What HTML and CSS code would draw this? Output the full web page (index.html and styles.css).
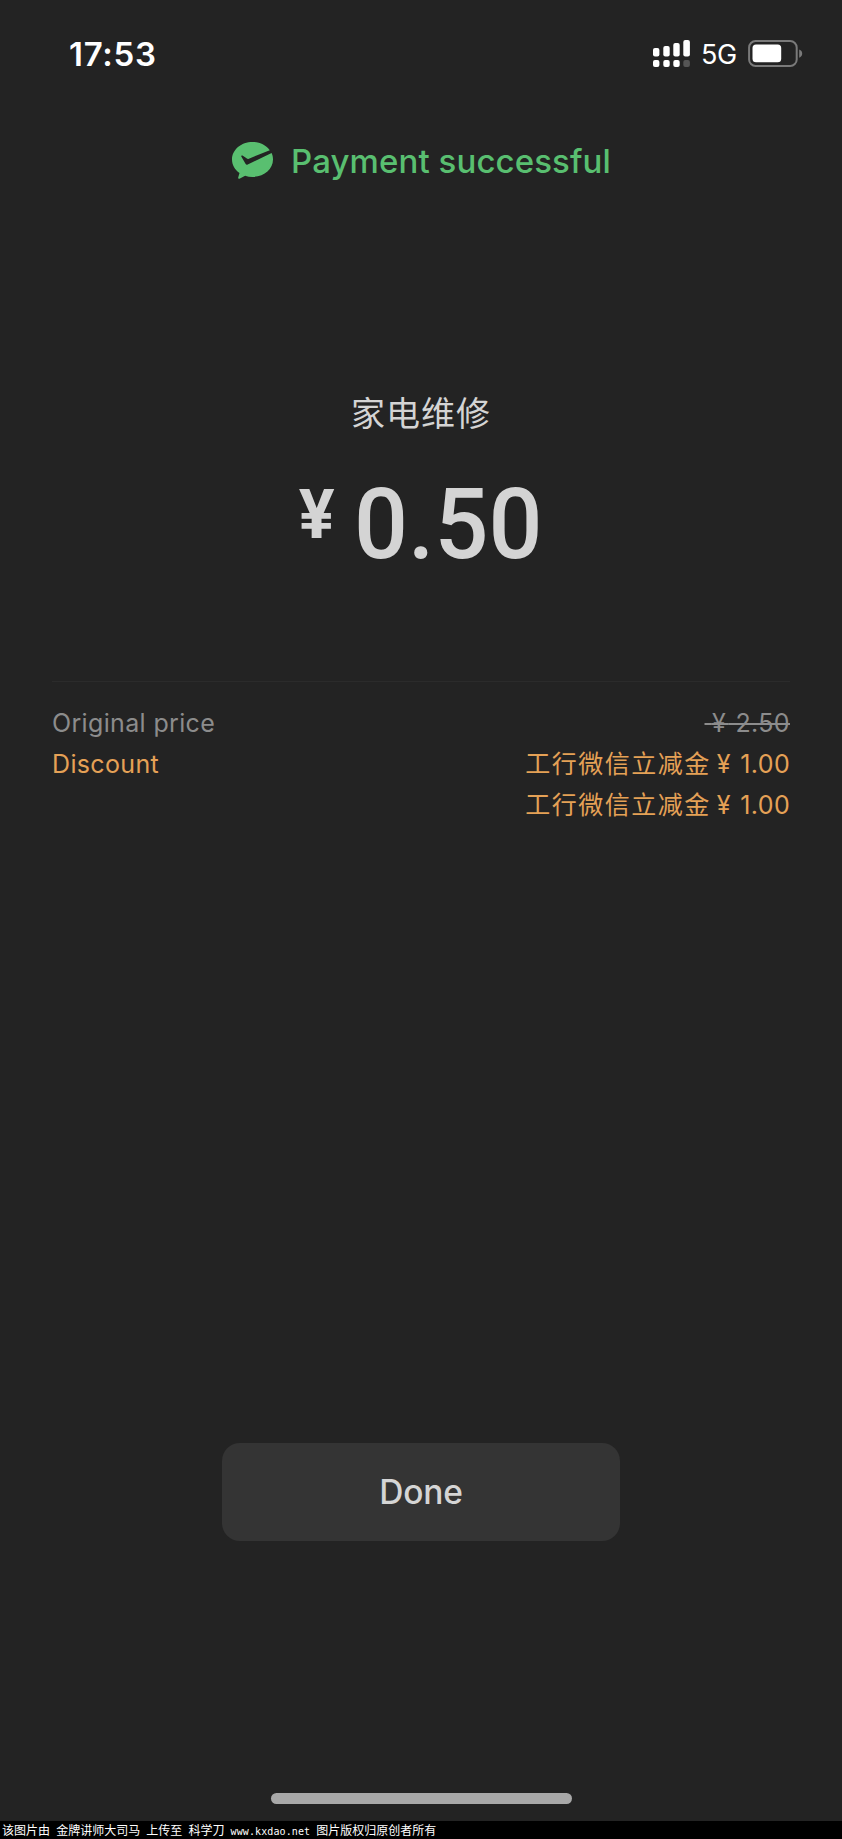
FILE: index.html
```html
<!DOCTYPE html>
<html lang="en">
<head>
<meta charset="utf-8">
<title>Payment successful</title>
<link rel="stylesheet" href="styles.css">
</head>
<body>
<main class="screen">
  <header class="status-bar">
    <span class="clock">17:53</span>
    <div class="indicators">
      <svg class="signal" width="38" height="28" viewBox="0 0 38 28" fill="#fff">
        <rect x="0" y="8" width="6.4" height="8.4" rx="2"/>
        <rect x="10.3" y="6" width="6.4" height="10.4" rx="2"/>
        <rect x="20.3" y="3" width="6.4" height="13.4" rx="2"/>
        <rect x="30.3" y="0" width="6.6" height="16.4" rx="2"/>
        <rect x="0" y="20" width="6.4" height="7" rx="2"/>
        <rect x="10.3" y="20" width="6.4" height="7" rx="2"/>
        <rect x="20.3" y="20" width="6.4" height="7" rx="2"/>
        <rect x="30.3" y="20" width="6.6" height="7" rx="2" fill="#555"/>
      </svg>
      <span class="network">5G</span>
      <svg class="battery" width="56" height="28" viewBox="0 0 56 28">
        <rect x="1.1" y="1.1" width="47.6" height="24.8" rx="6.5" fill="none" stroke="#7a7a7a" stroke-width="2"/>
        <rect x="4.5" y="4.6" width="28.7" height="17.6" rx="3.5" fill="#fff"/>
        <path d="M51.2 9.5c4 1.2 4 7 0 8.2z" fill="#7a7a7a"/>
      </svg>
    </div>
  </header>

  <div class="result">
    <svg class="result-icon" width="42" height="38" viewBox="0 0 42 38">
      <path d="M20.500 0C9.200 0 0 7.800 0 17.500c0 5.600 2.800 10.100 7.500 13.500L6.200 35.600c-.3 1 .4 1.500 1.300 1.100l5.600-3c2.300.8 4.800 1.200 7.400 1.200C31.800 35 41 27.200 41 17.500c0-2.300-.5-4.400-1.400-6.400L15.700 22.400q-1.400.7-2.200-.7L9.300 14.600q-.4-1.500 1.200-1l4.400 3q.9.500 1.900.1L37.800 8.200C34.200 3.200 27.900 0 20.500 0z" fill="#59bf70"/>
    </svg>
    <h1 class="result-text">Payment successful</h1>
  </div>

  <section class="summary">
    <div class="payee">家电维修</div>
    <div class="amount"><span class="currency">¥</span><span class="value">0.50</span></div>
  </section>

  <dl class="details">
    <div class="row muted"><dt>Original price</dt><dd class="struck">&nbsp;<span class="yen">¥</span> 2.50</dd></div>
    <div class="row accent"><dt>Discount</dt><dd><span class="coupon">工行微信立减金</span><span class="yen">¥</span> 1.00</dd></div>
    <div class="row accent"><dt></dt><dd><span class="coupon">工行微信立减金</span><span class="yen">¥</span> 1.00</dd></div>
  </dl>

  <button class="done" type="button">Done</button>
  <div class="home-indicator"></div>
</main>
<footer class="credit"><span>该图片由</span> <span>金牌讲师大司马</span> <span>上传至</span> <span>科学刀</span> www.kxdao.net <span>图片版权归原创者所有</span></footer>
</body>
</html>
```
FILE: styles.css
```css
* { box-sizing: border-box; }
body {
  margin: 0;
  background: #232323;
  font-family: Inter, "Noto Sans CJK SC", sans-serif;
}
.screen {
  display: flex;
  flex-direction: column;
  align-items: center;
  height: 1821px;
}
.status-bar {
  display: flex;
  justify-content: space-between;
  width: 100%;
  height: 70px;
  padding: 33px 38px 0 69px;
  color: #fff;
}
.clock {
  font-size: 33px;
  line-height: 42px;
  font-weight: 600;
  letter-spacing: 0.7px;
}
.indicators { display: flex; align-items: flex-start; }
.signal { margin-top: 7px; }
.network {
  margin-left: 10px;
  font-size: 27px;
  line-height: 44px;
  width: 37px;
  letter-spacing: -0.5px;
}
.battery { margin: 7px 0 0 10px; }
.result {
  display: flex;
  align-items: flex-start;
  margin-top: 71px;
  height: 50px;
  color: #59bf70;
}
.result-icon { margin: 1px 0 0 1px; }
.result-text {
  margin: 0 0 0 17px;
  font-size: 33px;
  line-height: 40px;
  font-weight: 450;
  letter-spacing: 0.1px;
  white-space: nowrap;
}
.summary {
  display: flex;
  flex-direction: column;
  align-items: center;
  margin-top: 196px;
  height: 294px;
  color: #d4d4d4;
}
.payee {
  font: 400 34px/50px "Noto Sans CJK SC", sans-serif;
  letter-spacing: 1px;
}
.amount {
  display: flex;
  font-family: Roboto, sans-serif;
  font-weight: 500;
  margin-top: 30px;
  transform: scaleX(0.97);
}
.currency {
  font-size: 69px;
  line-height: 80px;
  font-weight: 700;
  width: 57px;
  padding-top: 8px;
}
.value { font-size: 98px; line-height: 116px; }
.details {
  width: 738px;
  height: 762px;
  margin: 0;
  padding-top: 21px;
  border-top: 1px solid #2b2b2b;
  font-size: 25px;
  line-height: 41px;
  letter-spacing: 0.35px;
}
.row { display: flex; justify-content: space-between; height: 41px; }
.row dd { margin: 0; white-space: nowrap; }
.muted { color: #8c8c8c; }
.accent { color: #e5a156; }
.struck {
  text-decoration: line-through;
  text-decoration-thickness: 2px;
}
.coupon {
  font-family: "Noto Sans CJK SC", sans-serif;
  letter-spacing: 1.5px;
  line-height: 1;
  margin-right: 6px;
}
.yen { letter-spacing: 2.5px; }
.done {
  width: 398px;
  height: 98px;
  border: 0;
  border-radius: 18px;
  background: #343434;
  color: #d5d5d5;
  font: 450 33.5px/98px Inter, sans-serif;
  letter-spacing: -0.2px;
  padding: 0;
}
.home-indicator {
  width: 301px;
  height: 11px;
  margin-top: 252px;
  border-radius: 6px;
  background: #a8a8a8;
}
.credit {
  height: 18px;
  padding-left: 2px;
  background: #000;
  color: #fff;
  font: 10px/18px "DejaVu Sans Mono", monospace;
  letter-spacing: 0.1px;
  white-space: nowrap;
}
.credit span { font: 12px/18px "Noto Sans CJK SC", sans-serif; letter-spacing: 0; }
```
